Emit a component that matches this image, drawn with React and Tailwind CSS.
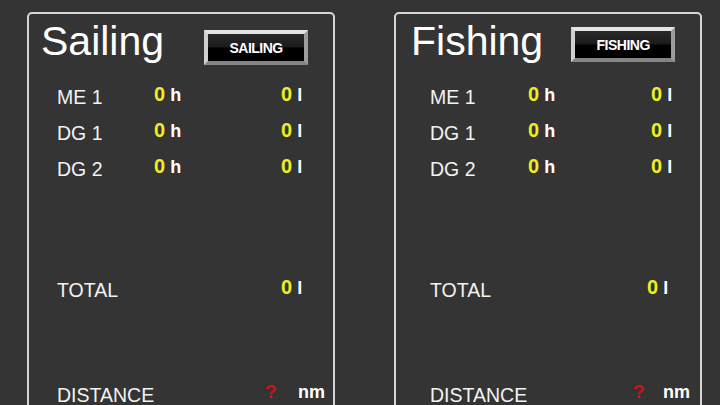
import React from 'react';

const rows = ['ME 1', 'DG 1', 'DG 2'];

// bevelled black push button
const ModeButton = ({ label, className }) => (
  <div
    className={`w-[104px] h-[35px] border-[4px] border-t-[#e4e4e4] border-l-[#d0d0d0] border-r-[#9c9c9c] border-b-[#858585] bg-[linear-gradient(to_bottom,#2a2a2a_0%,#1c1c1c_46%,#000_54%,#000_100%)] flex items-center justify-center ${className}`}
  >
    <span className="text-white font-bold text-[14px] tracking-[-0.5px] leading-none">{label}</span>
  </div>
);

const Value = ({ value, unit, color = 'text-[#eeee22]' }) => (
  <div className="h-[36px] leading-[30px] font-bold text-[18px] whitespace-nowrap">
    <span className={`${color} text-[20px]`}>{value}</span>
    <span className="text-white"> {unit}</span>
  </div>
);

const Panel = ({ title, button, layout }) => (
  <div className="w-[308px] h-[430px] shrink-0 border-2 border-[#d6d6d6] rounded-[5px] flex flex-col">
    <div className={`h-[65px] flex items-start ${layout.headPad}`}>
      <h1 className="text-[41px] leading-[40px] text-white mt-[7px]">{title}</h1>
      <ModeButton label={button} className={layout.btn} />
    </div>

    <div className={`grid ${layout.cols} ${layout.pad}`}>
      {rows.map((r) => (
        <React.Fragment key={r}>
          <div className="h-[36px] leading-[36px] text-[19.5px] text-[#f2f2f2]">{r}</div>
          <Value value="0" unit="h" />
          <Value value="0" unit="l" />
        </React.Fragment>
      ))}
    </div>

    <div className={`grid ${layout.totalCols} ${layout.pad} mt-[85px]`}>
      <div className="h-[36px] leading-[36px] text-[19.5px] text-[#f2f2f2]">TOTAL</div>
      <Value value="0" unit="l" />
    </div>

    <div className={`grid ${layout.distCols} ${layout.pad} mt-[69px]`}>
      <div className="h-[36px] leading-[36px] text-[19.5px] text-[#f2f2f2]">DISTANCE</div>
      <div className="h-[36px] leading-[30px] font-bold text-[19px] text-[#c81414]">?</div>
      <div className="h-[36px] leading-[30px] font-bold text-[18px] text-white">nm</div>
    </div>
  </div>
);

const sailing = {
  headPad: 'pl-[12px]',
  btn: 'ml-[40px] mt-[16px]',
  pad: 'pl-[28px]',
  cols: 'grid-cols-[97px_127px_60px]',
  totalCols: 'grid-cols-[224px_60px]',
  distCols: 'grid-cols-[208px_33px_40px]',
};

const fishing = {
  headPad: 'pl-[15px]',
  btn: 'ml-[28px] mt-[13px]',
  pad: 'pl-[34px]',
  cols: 'grid-cols-[98px_123px_60px]',
  totalCols: 'grid-cols-[217px_60px]',
  distCols: 'grid-cols-[203px_30px_40px]',
};

export default function App() {
  return (
    <div
      className="w-[720px] h-[405px] overflow-hidden bg-[#343434] flex gap-[59px] pl-[27px] pt-[12px]"
      style={{ fontFamily: '"Liberation Sans", Arial, sans-serif' }}
    >
      <Panel title="Sailing" button="SAILING" layout={sailing} />
      <Panel title="Fishing" button="FISHING" layout={fishing} />
    </div>
  );
}
